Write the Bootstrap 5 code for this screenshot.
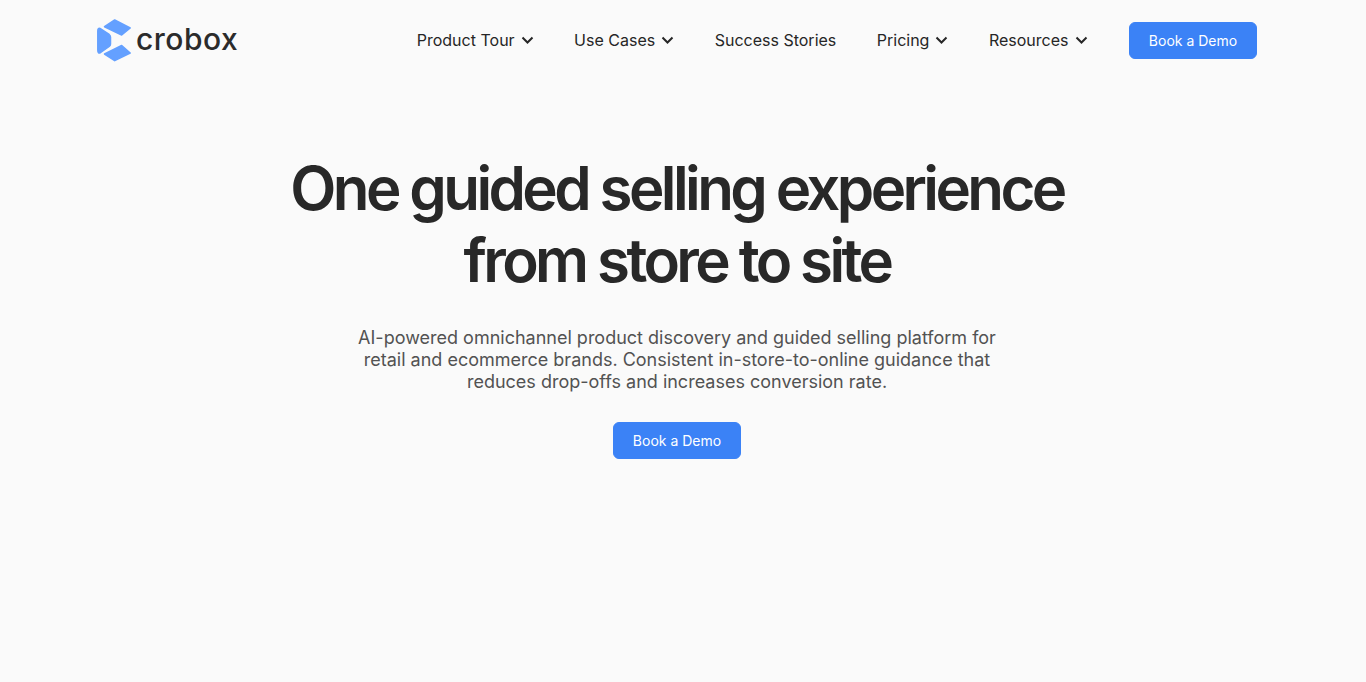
<!DOCTYPE html>
<html lang="en">
<head>
  <meta charset="UTF-8">
  <meta name="viewport" content="width=device-width, initial-scale=1.0">
  <title>Crobox</title>
  <link href="https://cdn.jsdelivr.net/npm/bootstrap@5.3.0/dist/css/bootstrap.min.css" rel="stylesheet">
  <style>
    body {
      background: #fafafa;
      font-family: Inter, sans-serif;
      color: #262626;
      height: 682px;
      overflow: hidden;
      padding-right: 12px;
    }
    .site-nav {
      width: 1160px;
      height: 80px;
      margin: 0 auto;
    }
    .logo-wrap {
      gap: 4px;
    }
    .logo-word {
      font-family: Inter, sans-serif;
      font-size: 30px;
      font-weight: 500;
      line-height: 1;
      color: #2b2b2b;
      letter-spacing: 0.5px;
      margin-top: -3px;
    }
    .menu-links {
      gap: 40.5px;
      margin-right: 41.5px;
    }
    .menu-link {
      font-size: 16px;
      color: #262626;
      text-decoration: none;
      gap: 6px;
    }
    .demo-btn {
      background: #3b82f6;
      color: #fff;
      font-size: 14px;
      width: 128px;
      height: 37px;
      padding: 0;
      border: 1px solid #3b82f6;
      border-radius: 6px;
      line-height: 35px;
    }
    .hero-area {
      padding-top: 72px;
    }
    .hero-title {
      font-size: 60px;
      font-weight: 600;
      line-height: 72px;
      letter-spacing: -3.6px;
      color: #282828;
      margin-bottom: 31px;
    }
    .hero-sub {
      font-size: 18px;
      line-height: 22px;
      color: #525252;
      width: 672px;
      margin-bottom: 29px;
    }
  </style>
</head>
<body>
  <!-- Nav -->
  <nav class="site-nav d-flex align-items-center justify-content-between">
    <a class="logo-wrap d-flex align-items-center text-decoration-none" href="#">
      <svg width="35" height="43" viewBox="0 0 35 43">
        <g fill="#64a0ff" stroke="#64a0ff" stroke-width="1.5" stroke-linejoin="round">
          <path d="M17.7 1 33.2 9 24.7 16 7.5 7.7Z"/>
          <path d="M24.7 26.5 33.2 34 17.7 41.7 7.5 35Z"/>
          <path d="M3 9.5 12.2 15.5Q13.5 16.5 13.5 18V25Q13.5 26.5 12.2 27.5L3 34Q.8 34.5.8 31V12Q.8 8.8 3 9.5Z"/>
        </g>
      </svg>
      <span class="logo-word">crobox</span>
    </a>
    <div class="d-flex align-items-center">
      <div class="menu-links d-flex align-items-center">
        <a class="menu-link d-flex align-items-center" href="#">Product Tour
          <svg width="13" height="8" viewBox="0 0 13 8"><path d="M1.5 1.5 6.5 6.5 11.5 1.5" fill="none" stroke="#262626" stroke-width="2"/></svg>
        </a>
        <a class="menu-link d-flex align-items-center" href="#">Use Cases
          <svg width="13" height="8" viewBox="0 0 13 8"><path d="M1.5 1.5 6.5 6.5 11.5 1.5" fill="none" stroke="#262626" stroke-width="2"/></svg>
        </a>
        <a class="menu-link d-flex align-items-center" href="#">Success Stories</a>
        <a class="menu-link d-flex align-items-center" href="#">Pricing
          <svg width="13" height="8" viewBox="0 0 13 8"><path d="M1.5 1.5 6.5 6.5 11.5 1.5" fill="none" stroke="#262626" stroke-width="2"/></svg>
        </a>
        <a class="menu-link d-flex align-items-center" href="#">Resources
          <svg width="13" height="8" viewBox="0 0 13 8"><path d="M1.5 1.5 6.5 6.5 11.5 1.5" fill="none" stroke="#262626" stroke-width="2"/></svg>
        </a>
      </div>
      <a class="btn demo-btn" href="#">Book a Demo</a>
    </div>
  </nav>

  <!-- Hero -->
  <section class="hero-area d-flex flex-column align-items-center text-center">
    <h1 class="hero-title">One guided selling experience<br>from store to site</h1>
    <p class="hero-sub">AI-powered omnichannel product discovery and guided selling platform for retail and ecommerce brands. Consistent in-store-to-online guidance that reduces drop-offs and increases conversion rate.</p>
    <a class="btn demo-btn" href="#">Book a Demo</a>
  </section>

  <script src="https://cdn.jsdelivr.net/npm/bootstrap@5.3.0/dist/js/bootstrap.bundle.min.js"></script>
</body>
</html>
